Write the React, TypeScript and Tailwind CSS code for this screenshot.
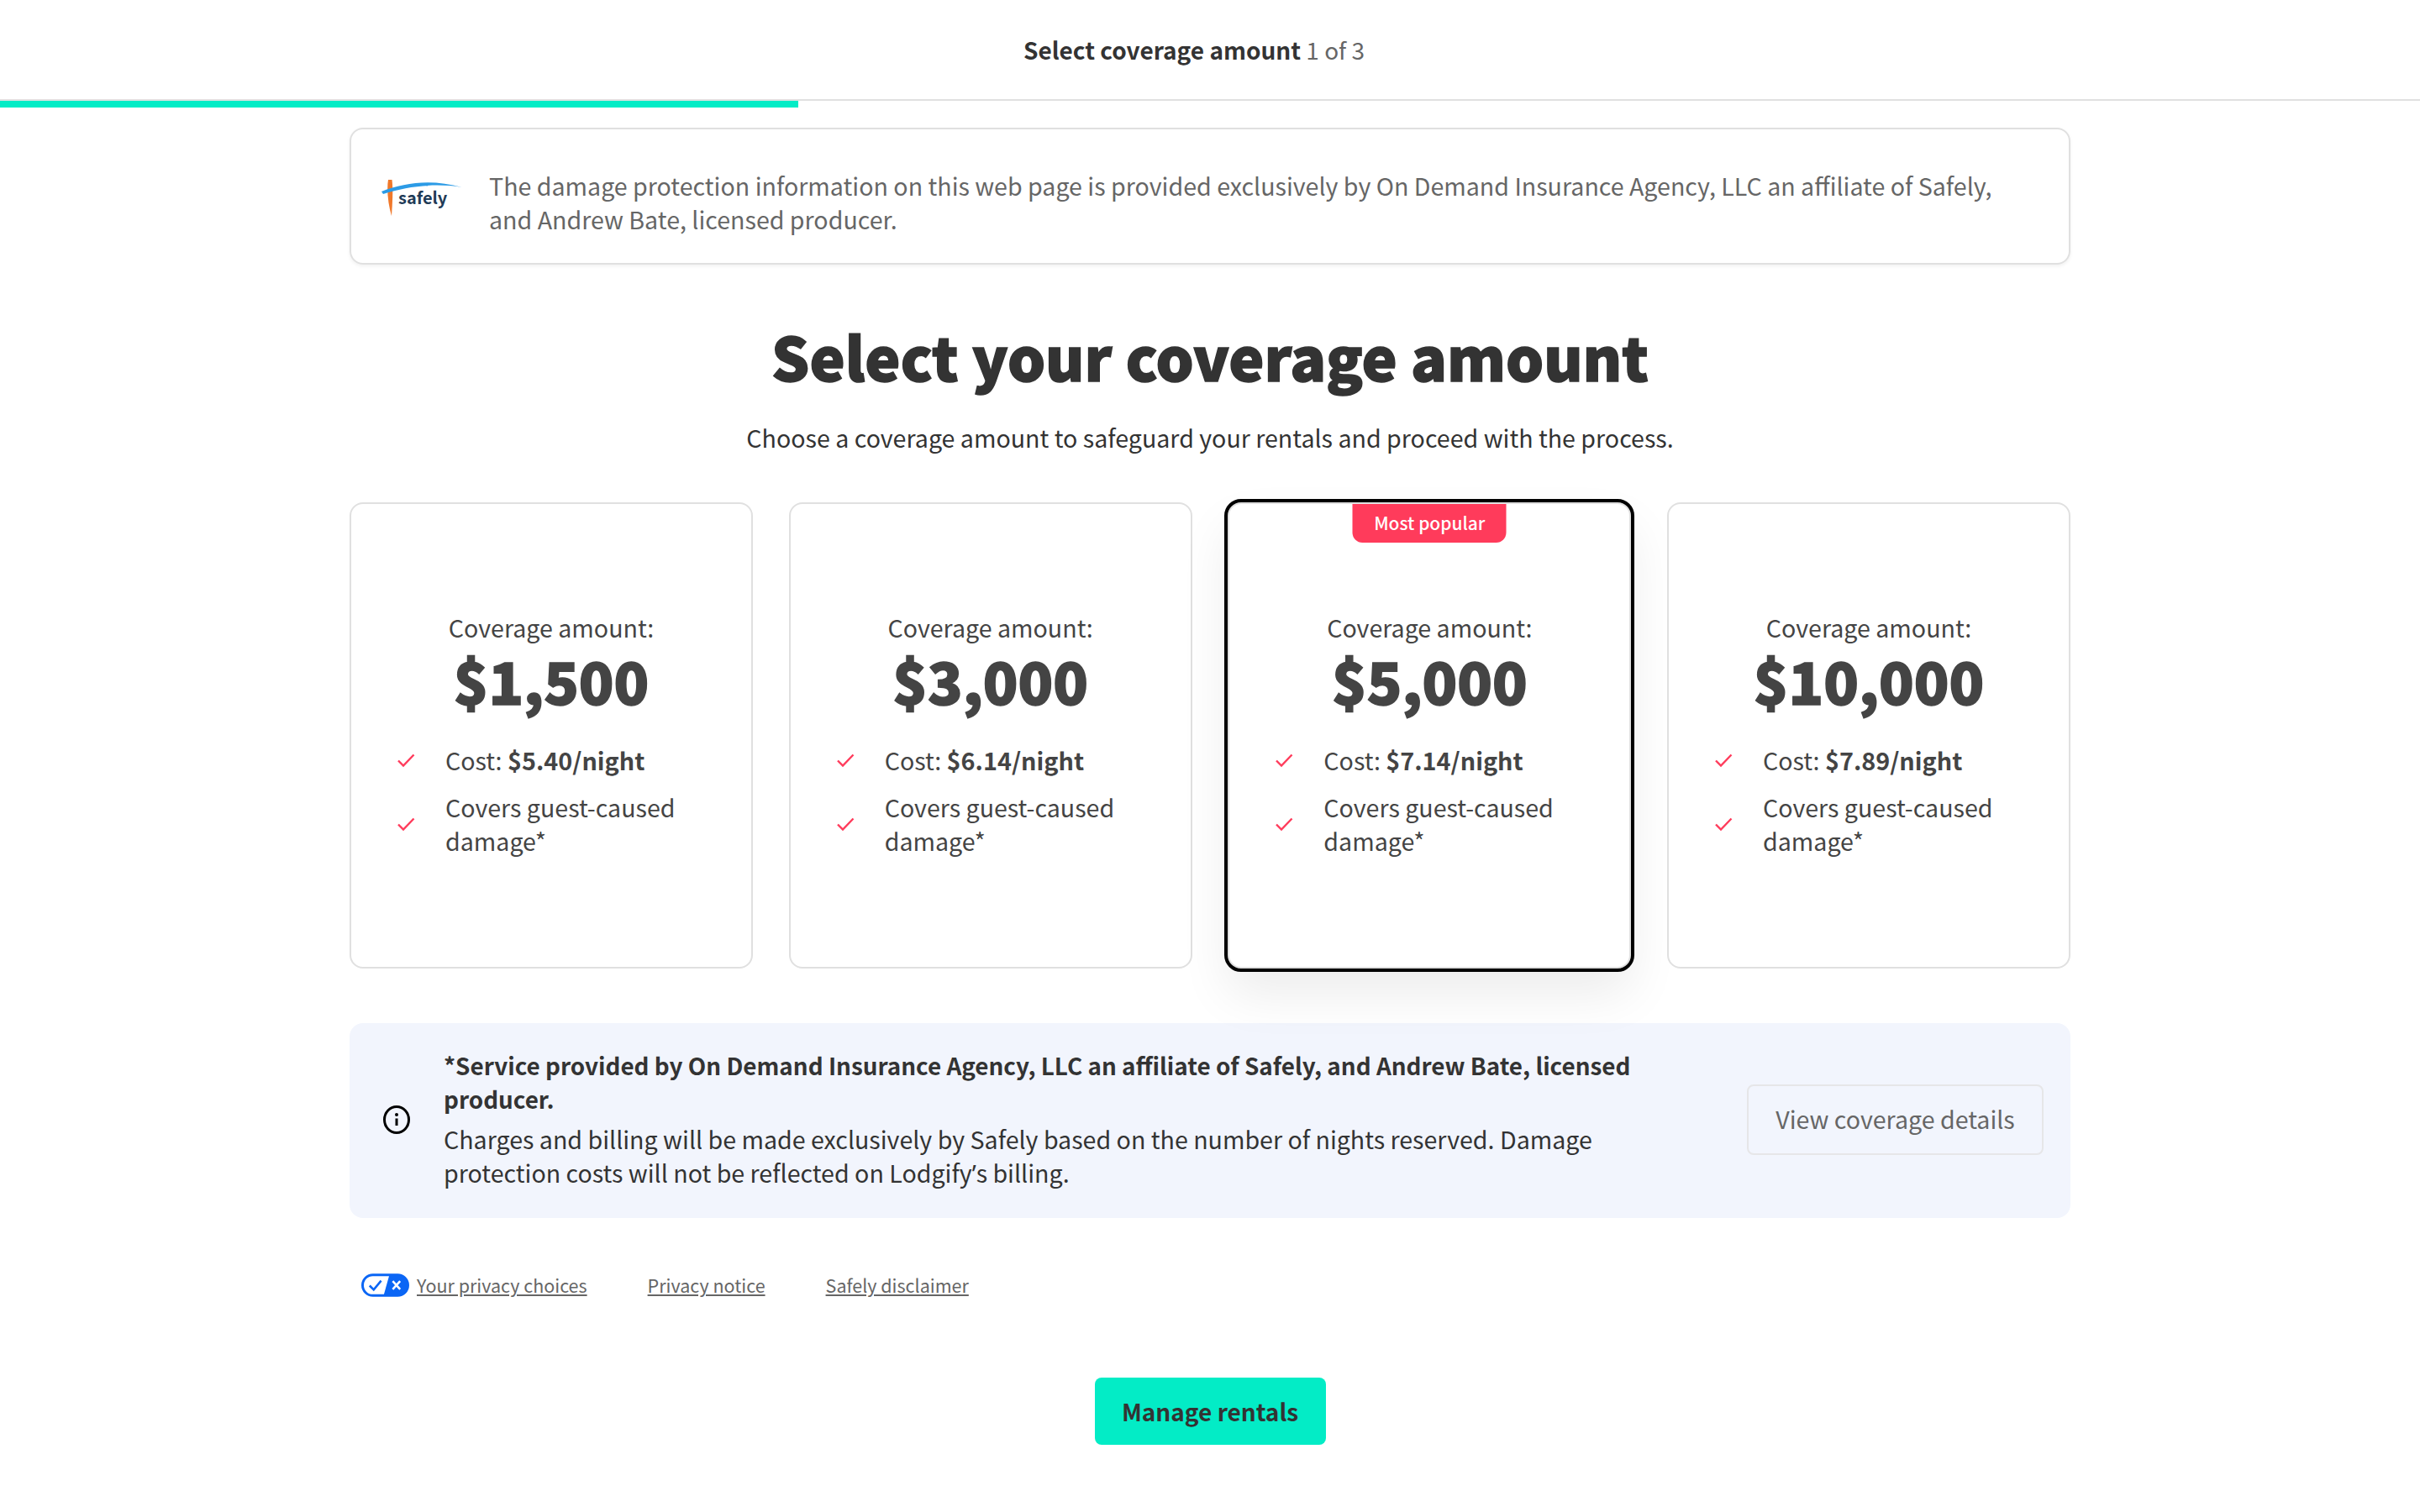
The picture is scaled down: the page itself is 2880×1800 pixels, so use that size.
const font = "[font-family:'Noto_Sans_CJK_SC','Noto_Sans',sans-serif]";

function Check() {
  return (
    <svg width="22" height="22" viewBox="0 0 22 22" fill="none" className="shrink-0">
      <path d="M2 11.5L8 17.5L20.5 4.5" stroke="#ff3b5b" strokeWidth="2.4" />
    </svg>
  );
}

function SafelyLogo() {
  return (
    <svg width="100" height="56" viewBox="0 0 100 56" className="shrink-0">
      <path d="M10 8C8 20 10 38 14 51C15 36 16 20 14.5 8Z" fill="#f0782a" />
      <path d="M2 22C30 11 62 7 98 17C68 12 34 15 4 25Z" fill="#2c9be6" />
      <text x="22" y="37" fontSize="20" fontWeight="700" fill="#1f3b57" fontFamily="'Noto Sans CJK SC', sans-serif">
        safely
      </text>
    </svg>
  );
}

function InfoIcon() {
  return (
    <svg width="32" height="34" viewBox="0 0 32 34" fill="none" className="shrink-0">
      <ellipse cx="16" cy="17" rx="14.5" ry="15.5" stroke="#000" strokeWidth="3" />
      <circle cx="16" cy="11" r="2" fill="#000" />
      <path d="M16 15.5V24" stroke="#000" strokeWidth="3" />
    </svg>
  );
}

function PrivacyToggle() {
  return (
    <svg width="57" height="28" viewBox="0 0 58 28" className="shrink-0">
      <rect x="1.5" y="1.5" width="55" height="25" rx="12.5" fill="#fff" stroke="#0b66f5" strokeWidth="3" />
      <path d="M34 1.5H44C51 1.5 56.5 7 56.5 14S51 26.5 44 26.5H27Z" fill="#0b66f5" />
      <path d="M10 14.5L15 19.5L24 8.5" stroke="#0b66f5" strokeWidth="2.6" fill="none" />
      <path d="M38 9L47 19M47 9L38 19" stroke="#fff" strokeWidth="2.6" />
    </svg>
  );
}

const plans = [
  { amount: "$1,500", cost: "$5.40/night" },
  { amount: "$3,000", cost: "$6.14/night" },
  { amount: "$5,000", cost: "$7.14/night", popular: true },
  { amount: "$10,000", cost: "$7.89/night" },
];

function PlanCard({ amount, cost, popular }: { amount: string; cost: string; popular?: boolean }) {
  return (
    <div
      className={
        popular
          ? "relative h-[555px] rounded-[16px] border-2 border-[#e0e0e0] bg-white outline-4 outline-black shadow-[0_30px_60px_rgba(0,0,0,0.08)]"
          : "relative h-[555px] rounded-[16px] border-2 border-[#e0e0e0] bg-white"
      }
    >
      {popular && (
        <div className="absolute left-1/2 top-0 -translate-x-1/2 w-[183px] h-[46px] bg-[#ff3b5b] rounded-b-[12px] text-white text-[21px] leading-[44px] text-center font-medium">
          Most popular
        </div>
      )}
      <div className="flex flex-col items-center pt-[127px]">
        <div className="text-[28.6px] leading-[40px] text-[#444]">Coverage amount:</div>
        <div className="text-[68.5px] leading-[86px] font-black text-[#444] [-webkit-text-stroke:1.5px_#444]">{amount}</div>
      </div>
      <div className="flex flex-col gap-[16px] pt-[32px] pl-[54px] pr-[40px] text-[28.6px] leading-[40px] text-[#444]">
        <div className="flex items-center gap-[36px]">
          <Check />
          <div>
            Cost: <span className="font-bold text-[28.8px]">{cost}</span>
          </div>
        </div>
        <div className="flex items-center gap-[36px]">
          <Check />
          <div>Covers guest-caused damage*</div>
        </div>
      </div>
    </div>
  );
}

export default function App() {
  return (
    <div className={`${font} min-h-[1800px] bg-white text-[#333]`}>
      <div className="h-[120px] border-b-2 border-[#e0e0e0] flex justify-center items-center pr-[38px]">
        <div className="text-[28px] leading-[40px]">
          <span className="font-bold">Select coverage amount</span> <span className="text-[#666]">1 of 3</span>
        </div>
      </div>
      <div className="h-[8px] w-[950px] bg-[#03ecc6]" />

      <div className="w-[2048px] mx-auto pt-[24px]">
        <div className="h-[163px] rounded-[16px] border-2 border-[#e0e0e0] shadow-[0_2px_4px_rgba(0,0,0,0.06)] flex items-center pl-[34px] pr-[60px] gap-[30px]">
          <SafelyLogo />
          <div className="text-[28.6px] leading-[40px] text-[#666] pt-[14px]">
            The damage protection information on this web page is provided exclusively by On Demand Insurance Agency, LLC an affiliate of Safely, and Andrew Bate, licensed producer.
          </div>
        </div>

        <h1 className="mt-[60px] text-center text-[71px] leading-[96px] font-black text-[#333] [-webkit-text-stroke:1.5px_#333]">
          Select your coverage amount
        </h1>
        <p className="mt-[30px] text-center text-[28.6px] leading-[40px] text-[#333]">
          Choose a coverage amount to safeguard your rentals and proceed with the process.
        </p>

        <div className="mt-[57px] grid grid-cols-4 gap-[42.67px]">
          {plans.map((plan) => (
            <PlanCard key={plan.amount} {...plan} />
          ))}
        </div>

        <div className="mt-[65px] h-[232px] rounded-[16px] bg-[#f2f5fd] flex items-center pl-[40px] pr-[32px] pb-[3px]">
          <InfoIcon />
          <div className="ml-[40px] w-[1450px] text-[28.6px] leading-[40px] text-[#333]">
            <div className="font-bold mb-[8px] text-[27.85px]">
              *Service provided by On Demand Insurance Agency, LLC an affiliate of Safely, and Andrew Bate, licensed producer.
            </div>
            <div>
              Charges and billing will be made exclusively by Safely based on the number of nights reserved. Damage protection costs will not be reflected on Lodgify
              <span className="font-['Noto_Sans']">’</span>s billing.
            </div>
          </div>
          <button className="ml-auto h-[84px] w-[353px] rounded-[8px] border-2 border-[#e6e6e8] text-[28.6px] text-[#666]">
            View coverage details
          </button>
        </div>

        <div className="mt-[64px] pl-[14px] flex items-center text-[21.5px] leading-[32px] text-[#666]">
          <PrivacyToggle />
          <a className="ml-[9px] underline">Your privacy choices</a>
          <a className="ml-[72px] underline">Privacy notice</a>
          <a className="ml-[72px] underline">Safely disclaimer</a>
        </div>

        <div className="mt-[94px] flex justify-center">
          <button className="h-[80px] w-[275px] rounded-[8px] bg-[#03ecc6] text-[28px] font-bold text-[#333]">
            Manage rentals
          </button>
        </div>
      </div>
    </div>
  );
}
